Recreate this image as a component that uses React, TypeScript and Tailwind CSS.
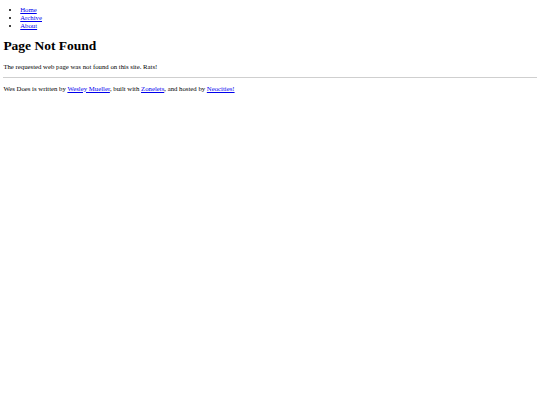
export default function App() {
  return (
    <div className="min-h-[405px] bg-white text-black px-[3.375px] pt-[6px] font-['Liberation_Serif','Times_New_Roman',serif] text-[6.75px] leading-[7.76px]">
      <ul className="list-disc pl-[16.875px]">
        <li><a href="#" className="text-[#0000ee] underline">Home</a></li>
        <li><a href="#" className="text-[#0000ee] underline">Archive</a></li>
        <li><a href="#" className="text-[#0000ee] underline">About</a></li>
      </ul>
      <h1 className="mt-[9.045px] text-[13.5px] leading-[15.525px] font-bold">Page Not Found</h1>
      <p className="mt-[9.045px]">The requested web page was not found on this site. Rats!</p>
      <hr className="mt-[6.5px] border-0 border-t-[1px] border-[#cfcfcf]" />
      <p className="mt-[6.5px]">
        Wes Does is written by <a href="#" className="text-[#0000ee] underline">Wesley Mueller</a>, built with{" "}
        <a href="#" className="text-[#0000ee] underline">Zonelets</a>, and hosted by{" "}
        <a href="#" className="text-[#0000ee] underline">Neocities!</a>
      </p>
    </div>
  );
}
